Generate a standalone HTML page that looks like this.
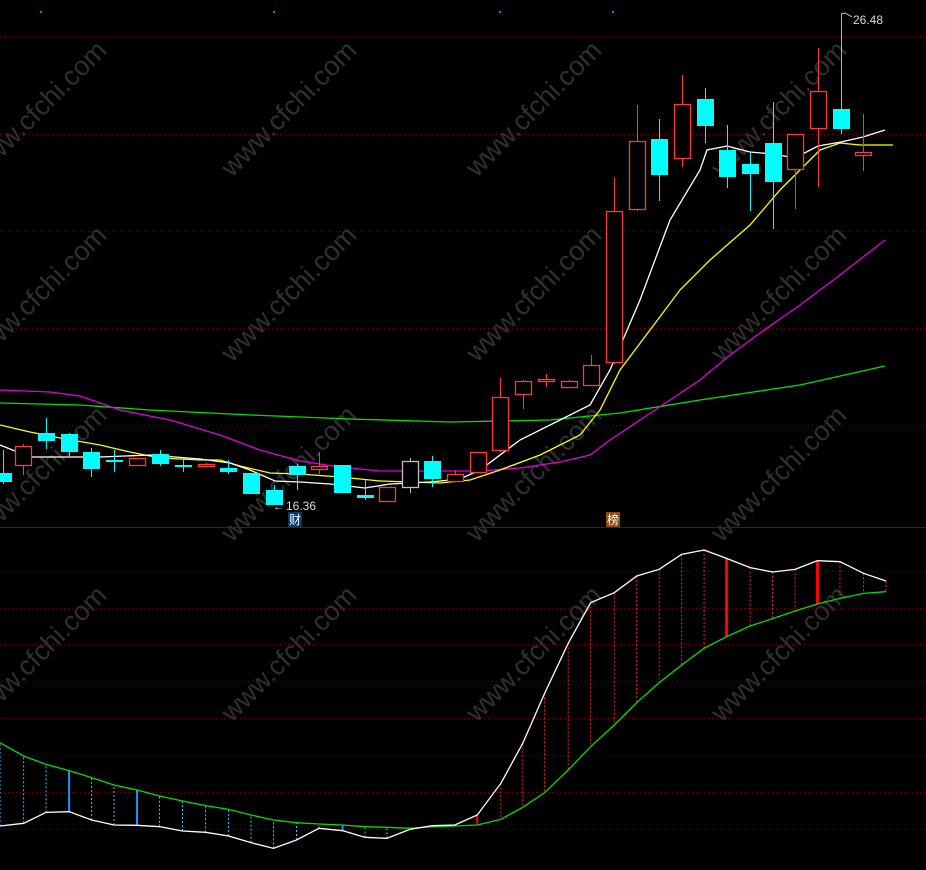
<!DOCTYPE html>
<html><head><meta charset="utf-8"><style>
html,body{margin:0;padding:0;background:#000;width:926px;height:870px;overflow:hidden}
svg{display:block}
</style></head><body>
<svg id="s" width="926" height="870" xmlns="http://www.w3.org/2000/svg" font-family="Liberation Sans, Noto Sans CJK SC, sans-serif">
<rect width="926" height="870" fill="#000"/>
<g id="grid" stroke="#7a0000" stroke-width="1" stroke-dasharray="1,3"></g>
<g id="wm" fill="#303030" font-size="27"></g>
<line x1="0" y1="527.5" x2="926" y2="527.5" stroke="#8b0000" stroke-width="1"/>
<g id="low"></g>
<g id="ma" fill="none" stroke-width="1.2"></g>
<g id="cd"></g>
<g fill="#ff00ff"><rect x="40" y="11" width="2" height="2"/><rect x="273" y="11" width="2" height="2"/><rect x="499" y="11" width="2" height="2"/><rect x="612" y="11" width="2" height="2"/></g>
<text x="286" y="510" fill="#d8d8d8" font-size="12">16.36</text>
<text x="273" y="510" fill="#d8d8d8" font-size="11">←</text>
<text x="853" y="24" fill="#d8d8d8" font-size="12">26.48</text>
<polyline points="841,14 845,13 852,17" fill="none" stroke="#ccc" stroke-width="1"/>
<rect x="288" y="512" width="14" height="15" fill="#0a3a6a"/>
<text x="289" y="524" fill="#fff" font-size="12">财</text>
<rect x="606" y="512" width="14" height="15" fill="#8a4a10"/>
<text x="607" y="524" fill="#fff" font-size="12">榜</text>
</svg>
<script>
const NS="http://www.w3.org/2000/svg";
function el(p,t,a,txt){const e=document.createElementNS(NS,t);for(const k in a)e.setAttribute(k,a[k]);if(txt)e.textContent=txt;document.getElementById(p).appendChild(e);return e;}
[36,134,231,328,425,571,608,644,681,718,755,792,829].forEach(y=>el('grid','line',{x1:0,y1:y+.5,x2:926,y2:y+.5}));
[[45,115],[295,115],[540,115],[785,115],[45,300],[295,300],[540,300],[785,300],[45,480],[295,480],[540,480],[785,480],[45,660],[295,660],[540,660],[785,660]].forEach(p=>el('wm','text',{x:p[0],y:p[1],'text-anchor':'middle',transform:`rotate(-45 ${p[0]} ${p[1]})`},'www.cfchi.com'));
const W=[[0,918],[40,910],[78,877],[117,875],[155,900],[193,915],[232,916],[270,920],[309,933],[348,937],[387,948],[425,968],[463,985],[502,960],[540,925],[580,932],[618,952],[655,955],[694,928],[732,917],[770,915],[808,885],[848,790],[885,670],[922,520],[962,370],[1000,248],[1040,218],[1078,168],[1116,148],[1154,103],[1192,90],[1230,115],[1270,143],[1308,156],[1346,148],[1384,122],[1422,125],[1462,160],[1500,183]].map(p=>[p[0]/1.693,520+p[1]/3]);
const G=[[0,668],[40,708],[78,733],[117,752],[155,773],[193,795],[232,810],[270,828],[309,843],[348,857],[387,868],[425,885],[463,900],[502,908],[540,912],[580,915],[618,920],[655,922],[694,925],[732,920],[770,918],[808,915],[848,898],[885,862],[922,818],[962,750],[1000,680],[1040,615],[1078,548],[1116,488],[1154,435],[1192,385],[1230,350],[1270,318],[1308,296],[1346,273],[1384,252],[1422,235],[1462,220],[1500,215]].map(p=>[p[0]/1.693,520+p[1]/3]);
W.forEach((w,i)=>{const g=G[i];const up=w[1]<g[1];
 if(i==32||i==36) el('low','line',{x1:w[0],y1:w[1],x2:w[0],y2:g[1],stroke:'#ff0000','stroke-width':3});
 else if(i==21) el('low','line',{x1:w[0],y1:w[1],x2:w[0],y2:g[1],stroke:'#ff0000','stroke-width':2});
 else if([3,6,15].includes(i)) el('low','line',{x1:w[0],y1:w[1],x2:w[0],y2:g[1],stroke:'#1e90ff','stroke-width':2});
 else el('low','line',{x1:w[0],y1:w[1],x2:w[0],y2:g[1],stroke:up?'#ff2020':'#30c8ff','stroke-width':1,'stroke-dasharray':'2,2'});
});
const pl=(pts,c,p)=>el(p,'polyline',{points:pts.map(q=>q.join(',')).join(' '),stroke:c,fill:'none','stroke-width':1.3});
pl(G,'#00e000','low');pl(W,'#ffffff','low');
pl([[0,403],[80,405],[150,410],[250,415],[350,419],[450,422],[550,420],[620,413],[700,400],[800,385],[885,366]],'#00e000','ma');
pl([[0,390],[50,392],[80,396],[120,410],[170,420],[220,435],[260,450],[300,461],[340,467],[380,471],[440,471],[480,471],[520,468],[560,462],[590,455],[610,440],[640,420],[670,400],[700,380],[730,355],[760,333],[800,305],[840,275],[885,240]],'#e000e0','ma');
pl([[0,425],[30,432],[60,438],[100,445],[130,452],[160,458],[200,460],[220,460],[240,466],[270,473],[300,474],[340,477],[380,481],[410,482],[440,483],[470,480],[500,470],[540,455],[580,435],[600,410],[620,370],[650,330],[680,290],[710,260],[750,225],[780,190],[800,170],[820,150],[840,143],[860,145],[893,145]],'#ffff00','ma');
pl([[0,445],[30,457],[100,457],[150,455],[200,459],[230,463],[250,470],[275,481],[300,482],[330,484],[365,488],[390,484],[430,482],[460,479],[480,470],[520,440],[560,420],[590,405],[610,370],[640,300],[670,220],[700,170],[707,150],[727,146],[750,152],[773,154],[795,158],[818,146],[841,142],[863,137],[885,130]],'#ffffff','ma');
const C=[[3,473,482,450,484,'c'],[23,446,465,444,475,'r'],[46,433,441,418,449,'c'],[69,434,452,433,458,'c'],[91,452,469,448,477,'c'],[114,460,462,450,472,'c'],[137,458,465,458,466,'r'],[160,454,464,450,466,'c'],[183,465,467,460,472,'c'],[206,464,466,463,467,'r'],[228,468,472,460,474,'c'],[251,473,494,473,494,'c'],[274,490,505,485,505,'c'],[297,466,475,464,490,'c'],[319,466,469,452,474,'r'],[342,465,493,465,493,'c'],[365,495,498,480,500,'c'],[387,487,501,487,501,'r'],[410,461,487,458,493,'w'],[432,461,479,456,487,'c'],[455,474,481,470,482,'r'],[478,452,472,452,472,'r'],[500,397,450,378,452,'r'],[523,381,394,380,409,'r'],[546,379,381,374,387,'r'],[569,381,387,380,388,'r'],[591,365,385,355,386,'r'],[614,211,362,178,364,'r'],[637,141,209,105,211,'r'],[659,139,175,119,201,'c'],[682,104,158,75,167,'r'],[705,99,126,88,143,'c'],[727,150,177,125,188,'c'],[750,164,174,153,211,'c'],[773,143,182,102,229,'c'],[795,134,169,134,209,'r'],[818,91,128,48,187,'r'],[841,109,129,14,134,'c'],[863,152,155,114,171,'r']];
C.forEach(c=>{const [x,t,b,wt,wb,k]=c;const col=k=='c'?'#00ffff':(k=='r'?'#ff3a3a':'#c0c0c0');
 el('cd','line',{x1:x+.5,y1:wt,x2:x+.5,y2:wb,stroke:col,'stroke-width':1});
 const h=Math.max(b-t,1.5);
 if(k=='c') el('cd','rect',{x:x-8,y:t,width:17,height:h,fill:col});
 else el('cd','rect',{x:x-7.5,y:t+.5,width:16,height:h,fill:'#000',stroke:col,'stroke-width':1.3});
});
</script>
</body></html>
